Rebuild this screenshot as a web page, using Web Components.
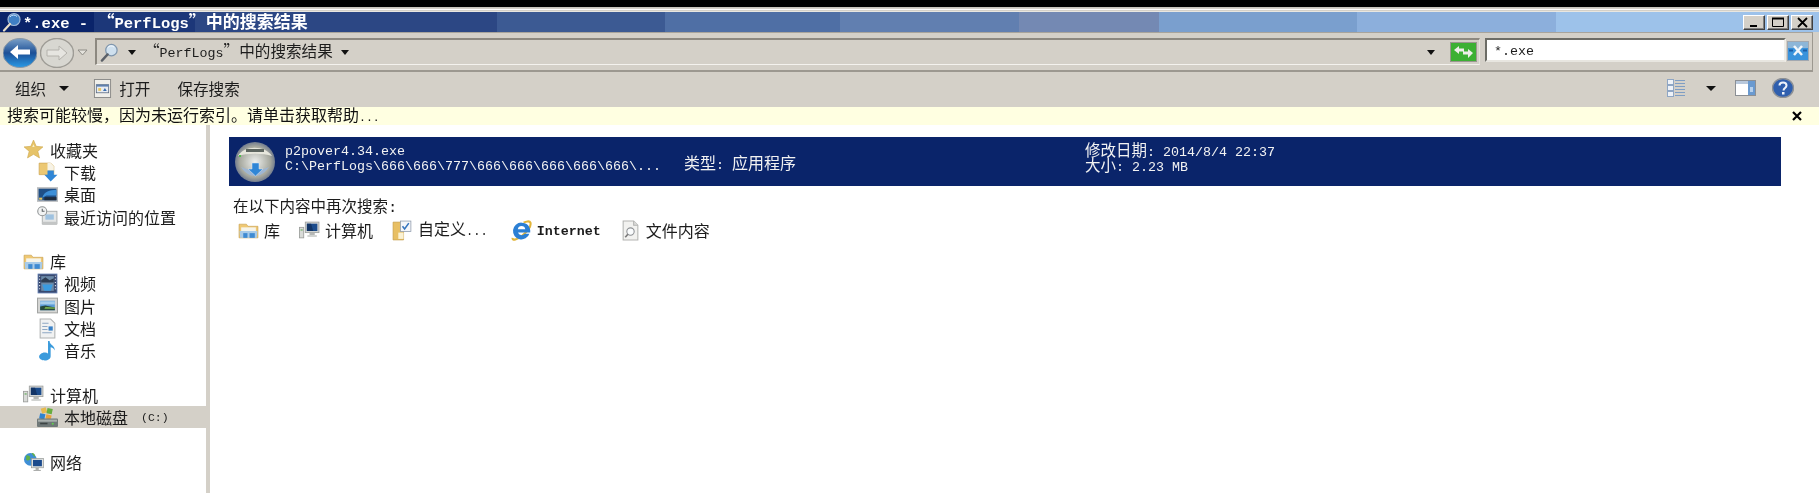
<!DOCTYPE html>
<html lang="zh-CN">
<head>
<meta charset="utf-8">
<title>*.exe - PerfLogs</title>
<style>
html, body { margin: 0; height: 100%; background: #000; overflow: hidden; }
</style>
</head>
<body>
<explorer-window>
  <title-bar slot="title"><lat-text>*.exe - </lat-text>“<lat-text>PerfLogs</lat-text>”中的搜索结果</title-bar>
  <address-bar slot="address">“<lat-text>PerfLogs</lat-text>”中的搜索结果</address-bar>
  <tool-bar slot="tools"></tool-bar>
  <info-bar slot="info">搜索可能较慢，因为未运行索引。请单击获取帮助<lat-text>...</lat-text></info-bar>
  <nav-pane slot="nav">
    <nav-item icon="star" head>收藏夹</nav-item>
    <nav-item icon="download">下载</nav-item>
    <nav-item icon="desktop">桌面</nav-item>
    <nav-item icon="recent">最近访问的位置</nav-item>
    <nav-item icon="library" head gap>库</nav-item>
    <nav-item icon="video">视频</nav-item>
    <nav-item icon="picture">图片</nav-item>
    <nav-item icon="doc">文档</nav-item>
    <nav-item icon="music">音乐</nav-item>
    <nav-item icon="computer" head gap>计算机</nav-item>
    <nav-item icon="drive" selected note="(C:)">本地磁盘</nav-item>
    <nav-item icon="network" head gap>网络</nav-item>
  </nav-pane>
  <result-row slot="main"
    name="p2pover4.34.exe"
    path="C:\PerfLogs\666\666\777\666\666\666\666\666\..."
    kind="应用程序"
    date="2014/8/4 22:37"
    size="2.23 MB"></result-row>
  <search-again slot="main">
    <again-item icon="library">库</again-item>
    <again-item icon="computer">计算机</again-item>
    <again-item icon="custom">自定义<lat-text>...</lat-text></again-item>
    <again-item icon="ie" style="margin-left:4px"><lat-text style="font-weight:700;font-size:13.330px">Internet</lat-text></again-item>
    <again-item icon="filetext">文件内容</again-item>
  </search-again>
</explorer-window>

<script>
const CJK = `"Noto Sans CJK SC", sans-serif`

// small icons, all on a 20x20 box
const ICONS = {
  star: `<path d="M10 1l2.6 6 6.4.5-4.9 4.2 1.6 6.3L10 14.6 4.3 18l1.6-6.3L1 7.5 7.4 7z" fill="#e6c368" stroke="#cfa94e" stroke-width=".6"/><path d="M10 5l1 2.6H8.8z" fill="#fbf0c8"/>`,
  download: `<path d="M2 2h11l3 3v8H2z" fill="#ecc873" stroke="#c9a352" stroke-width=".6"/><path d="M10 2h3l3 3v4h-6z" fill="#f7f3e6"/><path d="M10 9h6v4h3.5L13 19.5 7 13h3z" fill="#2f86d6"/>`,
  desktop: `<rect x="0" y="3" width="20" height="14" fill="#b9bcbe"/><rect x="1.5" y="4.5" width="17" height="11" fill="#1f4f86"/><path d="M5 13c2-6 7-7 13.5-7.500V11H9z" fill="#3c8fd8"/><rect x="7" y="12.500" width="11.500" height="3" fill="#1e2c3e"/><rect x="2" y="13" width="3" height="2" fill="#e5c460"/>`,
  recent: `<rect x="5" y="5" width="14" height="12" fill="#e4e6e6" stroke="#a3a6a6" stroke-width=".8"/><rect x="8" y="8" width="8" height="5" fill="#9fc2e0"/><rect x="5" y="15" width="14" height="3" fill="#c3c5c5"/><circle cx="5" cy="5" r="4.300" fill="#f2f3f3" stroke="#8f9394"/><path d="M5 2.500V5h2.200" stroke="#5b6164" fill="none"/>`,
  library: `<path d="M1 4h7l1.500 2H19v11H1z" fill="#efc873" stroke="#c8a14f" stroke-width=".6"/><rect x="3" y="7" width="14" height="4" fill="#f6f4ea"/><path d="M1.500 10.500h17L18 17H2z" fill="#a8cbe8"/><rect x="5" y="12.500" width="4" height="4.500" fill="#3f8bd2"/><rect x="11" y="12.500" width="5" height="4.500" fill="#3f8bd2"/>`,
  video: `<rect x="1" y="1" width="18" height="18" fill="#394a70" stroke="#5d79ae" stroke-width=".8"/><rect x="4" y="3" width="12" height="14" fill="#6b8aa8"/><path d="M4 7l4-3 4 3 4-2v4H4z" fill="#2d3d52"/><path d="M5 11h10l-2 6H7z" fill="#3a9be0"/><path d="M2 3h1M2 6h1M2 9h1M2 12h1M2 15h1M17 3h1M17 6h1M17 9h1M17 12h1M17 15h1" stroke="#dfe6f0"/>`,
  picture: `<rect x="0.500" y="3" width="19" height="14" fill="#d6d7d5" stroke="#a2a4a2"/><rect x="3" y="5.500" width="14" height="9" fill="#5a9bd6"/><path d="M3 6h14v3H3z" fill="#a8cfeb"/><path d="M3 11l5-1 9 2v2.500H3z" fill="#254a3e"/><path d="M8 11.500l9 .5v1H7z" fill="#79b24c"/>`,
  doc: `<path d="M3 1h10l4 4v14H3z" fill="#f1f2f2" stroke="#b0b2b2"/><path d="M5 5h6M5 8h5M5 11h5M5 14h9" stroke="#8fa8c4"/><rect x="11" y="8" width="4" height="4" fill="#3a82c8"/>`,
  music: `<path d="M12 1c0 4 5 4 5 9-1-2-3-3-4-3v8.500c0 2.500-2.500 4-5.500 4S2 18 2 16s3-4.500 6-4c1 .1 2 .5 2.500 1V1z" fill="#3b9bdc"/>`,
  computer: `<rect x="6" y="2" width="13" height="10" fill="#d7d8d6" stroke="#9da09e" stroke-width=".8"/><rect x="7.500" y="3.500" width="10" height="7" fill="#1c4c8c"/><path d="M7.500 3.500h4l2 7h-6z" fill="#123466"/><rect x="10" y="12" width="5" height="2.500" fill="#b6b8b6"/><rect x="8" y="14.500" width="9" height="1.500" fill="#c8cac8"/><rect x="0.500" y="7" width="4" height="10" fill="#d9dbd8" stroke="#9a9c9a" stroke-width=".8"/><rect x="1.500" y="9" width="2" height="1" fill="#57a64e"/>`,
  drive: `<path d="M4 1h5v5H4z" fill="#e6b94e" transform="rotate(-18 6 3)"/><path d="M10 1l5 1-1 5-5-1z" fill="#67ad3f"/><path d="M3 6l5 1-1 5-5-1z" fill="#2f83d0"/><path d="M9 7l5 1-1 4-5-1z" fill="#e9a23d"/><rect x="0" y="11" width="20" height="8" rx="1" fill="#6f7878"/><rect x="1" y="12" width="18" height="2" fill="#a9b0ae"/><circle cx="15" cy="16" r="1" fill="#5fd04b"/><rect x="3" y="15" width="7" height="1.500" fill="#3c4444"/>`,
  network: `<circle cx="7" cy="8" r="6" fill="#3f8fd6"/><path d="M3 4c3 0 4 1 4 3s-3 3-4 1zM8 2c3 0 4 2 3 4z" fill="#5fb04a"/><rect x="8" y="7" width="11.500" height="9" fill="#dfe1df" stroke="#8e9290" stroke-width=".6"/><rect x="9.500" y="8.500" width="8.500" height="6" fill="#1b4a8c"/><rect x="12" y="16" width="3" height="2" fill="#a8aaa8"/><rect x="10" y="18" width="7" height="1" fill="#a8aaa8"/>`,
  custom: `<path d="M1 2h10v17H1z" fill="#e8bf63" stroke="#c39a48" stroke-width=".6"/><rect x="8" y="1" width="10" height="10" fill="#f4f6fa" stroke="#8a97a8" stroke-width=".7"/><path d="M10 6l2 2.500L16 3" stroke="#3474bd" fill="none" stroke-width="1.500"/><rect x="6" y="12" width="5" height="6" fill="#fbf2d4"/>`,
  ie: `<path d="M1.500 17c-.5 2.500 3.500 2.500 8.500-1.500s9.500-9.500 8.500-13C17.800.500 14 1.500 12 2.500" fill="none" stroke="#e2b53a" stroke-width="2"/><path d="M10 2.500a8 8 0 1 0 7.500 10.500h-4.500a3.600 3.600 0 0 1-6.300-1.200H18.300C19 6.500 15.500 2.500 10 2.500zM6.500 8.800A3.600 3.600 0 0 1 13.600 8.800z" fill="#2b7fd4" fill-rule="evenodd"/>`,
  filetext: `<path d="M3 1h10l4 4v14H3z" fill="#f2f2f0" stroke="#b3b4b2"/><path d="M13 1v4h4" fill="#dcdcda" stroke="#b3b4b2"/><circle cx="10" cy="11" r="3.500" fill="#fafcfd" stroke="#8d9094"/><path d="M7.500 13.500L5 16.500" stroke="#777" stroke-width="1.500"/>`,
  open: `<rect x="1.500" y="0.500" width="17" height="19" fill="#f0efea" stroke="#8a8a88"/><rect x="3.500" y="6" width="13" height="8.500" fill="#e8ecf2" stroke="#54657e" stroke-width=".8"/><rect x="3.500" y="6" width="13" height="2" fill="#5f80ae"/><rect x="5.500" y="9.500" width="3" height="3" fill="#e9c863"/><path d="M10.500 12.500l2-3 2 3z" fill="#3a6fb0"/>`,
  glass: `<circle cx="12" cy="7.500" r="6" fill="#cfe0ee" stroke="#7f96ad" stroke-width="1.300"/><path d="M8 5a4.500 4.500 0 0 1 7-.5" stroke="#f7fbff" fill="none"/><path d="M8 12L2 18.500" stroke="#5b6068" stroke-width="2.500" stroke-linecap="round"/>`,
  glassDark: `<circle cx="12" cy="7.500" r="6" fill="#3f7fc4" stroke="#9db7d8" stroke-width="1.200"/><path d="M8 5a4.500 4.500 0 0 1 7-.5" stroke="#cfe6ff" fill="none"/><path d="M8 12L2 18.500" stroke="#e8dfc8" stroke-width="2.200" stroke-linecap="round"/>`,
}

class LatText extends HTMLElement {
  constructor() {
    super()
    // no whitespace before the slot: this sits inside running text
    this.attachShadow({mode: 'open'}).innerHTML = `<style>
:host {
  display: inline;
  font-family: "Liberation Mono", monospace;
  font-size: var(--lat-size, .833em);
}
</style><slot></slot>`
  }
}
customElements.define('lat-text', LatText)

class WinIcon extends HTMLElement {
  constructor() {
    super()
    this.attachShadow({mode: 'open'})
  }
  connectedCallback() {
    const s = this.getAttribute('size') || 21
    this.shadowRoot.innerHTML = `
<style>:host { display: block; flex: none; width: ${s}px; height: ${s}px; } svg { display: block; }</style>
<svg viewBox="0 0 20 20" width="${s}" height="${s}">${ICONS[this.getAttribute('name')]}</svg>`
  }
}
customElements.define('win-icon', WinIcon)

class ExplorerWindow extends HTMLElement {
  constructor() {
    super()
    this.attachShadow({mode: 'open'}).innerHTML = `
<style>
:host {
  display: flex;
  flex-direction: column;
  height: 486px;
  margin-top: 7px;
  background: #d4d0c8;
  font: 16px/20px ${CJK};
  text-autospace: no-autospace;
  color: #1c1c1c;
  filter: blur(.4px);
  overflow: hidden;
}
.edge { height: 5px; flex: none; background: #d4d0c8; border-top: 1px solid #c8c4bc; border-bottom: 1px solid #e8e6e0; box-sizing: border-box; }
.edge::before { content: ""; display: block; height: 1px; margin-top: 1px; background: #fff; }
.body { flex: 1; display: flex; min-height: 0; background: #fff; }
.split { flex: none; width: 4px; margin-left: -3px; background: #d4d0c8; }
main { flex: 1; padding: 12px 38px 0 19px; min-width: 0; }
</style>
<div class="edge"></div>
<slot name="title"></slot>
<slot name="address"></slot>
<slot name="tools"></slot>
<slot name="info"></slot>
<div class="body">
  <slot name="nav"></slot>
  <div class="split"></div>
  <main><slot name="main"></slot></main>
</div>`
  }
}
customElements.define('explorer-window', ExplorerWindow)

class TitleBar extends HTMLElement {
  constructor() {
    super()
    this.attachShadow({mode: 'open'}).innerHTML = `
<style>
:host {
  display: flex;
  align-items: center;
  flex: none;
  height: 20px;
  padding: 0 6px 0 2px;
  color: #fff;
  font-weight: 700;
  font-size: 17px;
  --lat-size: 15.5px;
  background: linear-gradient(90deg,
    #0a246a 0 94px, #1c3779 94px 195px, #2c4784 195px 497px, #3c5a93 497px 665px,
    #4f6fa5 665px 840px, #617fb0 840px 1019px, #7489b3 1019px 1159px,
    #7a9fce 1159px 1357px, #8cafdc 1357px 1556px, #9dc2ea 1556px);
}
.text { flex: 1; margin-left: 1px; white-space: nowrap; }
.btns { display: flex; gap: 2px; }
.btns button {
  width: 22px; height: 15px; padding: 0; margin: 0;
  background: #d4d0c8;
  border: 1px solid; border-color: #fff #404040 #404040 #fff;
  box-shadow: inset -1px -1px 0 #808080;
  display: flex; align-items: center; justify-content: center;
}
</style>
<win-icon name="glassDark" size="20"></win-icon>
<div class="text"><slot></slot></div>
<div class="btns">
  <button aria-label="最小化"><svg width="12" height="11"><rect x="2" y="8" width="7" height="2" fill="#000"/></svg></button>
  <button aria-label="最大化"><svg width="14" height="11"><path d="M1.500 1.500h11v8h-11z" fill="none" stroke="#000"/><path d="M1 1.500h12" stroke="#000" stroke-width="2"/></svg></button>
  <button aria-label="关闭"><svg width="13" height="11"><path d="M2 1l9 9M11 1l-9 9" stroke="#000" stroke-width="1.800"/></svg></button>
</div>`
  }
}
customElements.define('title-bar', TitleBar)

class AddressBar extends HTMLElement {
  constructor() {
    super()
    this.attachShadow({mode: 'open'}).innerHTML = `
<style>
:host {
  display: flex;
  flex: none;
  height: 40px;
  box-sizing: border-box;
  padding: 5px 3px 0 3px;
  background: #d4d0c8;
  border-top: 1px solid #a8a49c;
  border-bottom: 2px solid #9c9890;
  border-right: 1px solid #9c9890;
  margin-right: 6px;
  font-size: 15.600px;
  --lat-size: 13.330px;
}
.circle { width: 34px; height: 30px; flex: none; margin-right: 3px; margin-top: 0; }
.drop { margin: 11px 7px 0 0; flex: none; }
.field {
  flex: 1;
  height: 24px;
  display: flex;
  align-items: center;
  padding-left: 3px;
  border: 2px solid; border-color: #8c8880 #e4e2dc #f4f2ee #8c8880;
  border-width: 2px 1px 1px 2px;
}
.crumb { margin: 0 8px; flex: none; white-space: nowrap; }
.arrow { width: 0; height: 0; flex: none; border: 4.500px solid transparent; border-top: 5px solid #111; border-bottom: 0; }
.spring { flex: 1; }
.go { margin: 0 2px 0 15px; flex: none; }
.search {
  width: 301px; flex: none; margin-left: 5px;
  height: 24px;
  box-sizing: border-box;
  background: #fff;
  border: 2px solid; border-color: #6c6c66 #f0eee8 #e8e6e0 #6c6c66;
  padding: 4px 0 0 7px;
  display: flex; align-items: center;
  font-family: "Liberation Mono", monospace;
  font-size: 13.330px;
}
.clear { flex: none; margin-left: 1px; margin-top: 3px; }
</style>
<svg class="circle" viewBox="0 0 34 30">
  <defs>
    <linearGradient id="b" x1="0" y1="0" x2="0" y2="1"><stop offset="0" stop-color="#7aa0c8"/><stop offset=".5" stop-color="#1c4f96"/><stop offset="1" stop-color="#2a9ae6"/></linearGradient>
  </defs>
  <ellipse cx="17" cy="15" rx="17" ry="14.500" fill="url(#b)" stroke="#8a98a6"/>
  <path d="M7 14l8-7v4.500h12v5H15V21z" fill="#fff"/>
</svg>
<svg class="circle" viewBox="0 0 34 30">
  <ellipse cx="17" cy="15" rx="16.500" ry="14.500" fill="#d8d7d1" stroke="#9e9c96" stroke-width="1.500"/>
  <path d="M27 15l-8-7v4H7v6h12v4z" fill="#e6e5e0" stroke="#b4b2ac"/>
</svg>
<svg class="drop" width="11" height="7"><path d="M1 1h9L5.500 6z" fill="#e4e2dc" stroke="#8e8c86"/></svg>
<div class="field">
  <win-icon name="glass" size="19"></win-icon>
  <span class="arrow" style="margin-left:9px"></span>
  <span class="crumb"><slot></slot></span>
  <span class="arrow"></span>
  <span class="spring"></span>
  <span class="arrow"></span>
  <svg class="go" width="27" height="20" viewBox="0 0 27 20">
    <rect x=".5" y=".5" width="26" height="19" fill="#3cb034" stroke="#99978f"/>
    <path d="M4 8l5-4v2.500h5v3H9V12zM23 11l-5-4v2.500h-5v3h5V16z" fill="#eeeeea"/>
  </svg>
</div>
<div class="search">*.exe</div>
<svg class="clear" width="22" height="20" viewBox="0 0 22 20">
  <rect x=".5" y=".5" width="21" height="19" fill="#3a93dc" stroke="#a2a8b0"/>
  <rect x="1" y="1" width="20" height="6" fill="#8db6d8"/>
  <path d="M7 5l8 9M15 5l-8 9" stroke="#f2f6fa" stroke-width="2.500"/>
  <path d="M2 9.500h4M16 9.500h4" stroke="#1c5ea8" stroke-width="2"/>
</svg>`
  }
}
customElements.define('address-bar', AddressBar)

class ToolBar extends HTMLElement {
  constructor() {
    super()
    this.attachShadow({mode: 'open'}).innerHTML = `
<style>
:host {
  display: flex;
  align-items: center;
  flex: none;
  height: 35px;
  box-sizing: border-box;
  padding: 0 25px 3px 15px;
  background: #d4d0c8;
  font-size: 15.600px;
}
.arrow { width: 0; height: 0; flex: none; border: 5px solid transparent; border-top: 5px solid #111; border-bottom: 0; }
.spring { flex: 1; }
</style>
<span>组织</span>
<span class="arrow" style="margin:0 24px 0 13px"></span>
<win-icon name="open" size="19"></win-icon>
<span style="margin-left:7px">打开</span>
<span style="margin-left:27px">保存搜索</span>
<span class="spring"></span>
<svg width="19" height="18" viewBox="0 0 19 18">
  <rect x=".5" y=".5" width="6" height="5" fill="#eef2f8" stroke="#8fa6c4"/><rect x=".5" y="6.500" width="6" height="5" fill="#eef2f8" stroke="#8fa6c4"/><rect x=".5" y="12.500" width="6" height="5" fill="#eef2f8" stroke="#8fa6c4"/>
  <path d="M8 1.500h10M8 4.500h10M8 7.500h10M8 10.500h10M8 13.500h10M8 16.500h10" stroke="#7f9ec4"/>
</svg>
<span class="arrow" style="margin:0 19px 0 20px"></span>
<svg width="21" height="16" viewBox="0 0 21 16">
  <rect x=".5" y=".5" width="20" height="15" fill="#fff" stroke="#8b8f94"/>
  <rect x="1" y="1" width="19" height="3" fill="#b8c8dc"/>
  <rect x="13" y="1" width="7" height="14" fill="#6a9ad0"/>
  <rect x="15" y="7" width="3" height="5" fill="#b6d0ec"/>
</svg>
<svg style="margin-left:16px" width="22" height="20" viewBox="0 0 22 20">
  <ellipse cx="11" cy="10" rx="10.500" ry="9.500" fill="#2f5fae" stroke="#8d9196" stroke-width="1.500"/>
  <path d="M7.500 7.500c0-4 7-4 7 0 0 2.500-3 2.500-3 5" fill="none" stroke="#eef3fa" stroke-width="2"/>
  <rect x="10" y="14" width="2.500" height="2.500" fill="#eef3fa"/>
</svg>`
  }
}
customElements.define('tool-bar', ToolBar)

class InfoBar extends HTMLElement {
  constructor() {
    super()
    this.attachShadow({mode: 'open'}).innerHTML = `
<style>
:host {
  display: flex;
  align-items: center;
  flex: none;
  height: 18px;
  padding: 0 16px 0 7px;
  background: #ffffe1;
  color: #111;
  --lat-size: 11.500px;
}
.text { flex: 1; white-space: nowrap; }
</style>
<span class="text"><slot></slot></span>
<svg width="12" height="10"><path d="M2 1l8 8M10 1L2 9" stroke="#000" stroke-width="2.200"/></svg>`
  }
}
customElements.define('info-bar', InfoBar)

class NavPane extends HTMLElement {
  constructor() {
    super()
    this.attachShadow({mode: 'open'}).innerHTML = `
<style>
:host {
  display: block;
  flex: none;
  width: 209px;
  box-sizing: border-box;
  padding-top: 13.500px;
}
</style>
<slot></slot>`
  }
}
customElements.define('nav-pane', NavPane)

class NavItem extends HTMLElement {
  constructor() {
    super()
    this.attachShadow({mode: 'open'})
  }
  connectedCallback() {
    const head = this.hasAttribute('head')
    const note = this.getAttribute('note')
    this.shadowRoot.innerHTML = `
<style>
:host {
  display: flex;
  align-items: center;
  height: 22.300px;
  box-sizing: border-box;
  padding-left: ${head ? 23 : 37}px;
  margin-top: ${this.hasAttribute('gap') ? 22.300 : 0}px;
  white-space: nowrap;
}
:host([selected]) { background: #d4d0c8; }
.label { margin-left: 6px; }
.note { margin-left: 13px; font: 11.500px "Liberation Mono", monospace; }
</style>
<win-icon name="${this.getAttribute('icon')}"></win-icon>
<span class="label"><slot></slot></span>
${note ? `<span class="note">${note}</span>` : ''}`
  }
}
customElements.define('nav-item', NavItem)

class ResultRow extends HTMLElement {
  constructor() {
    super()
    this.attachShadow({mode: 'open'})
  }
  connectedCallback() {
    const a = n => this.getAttribute(n)
    this.shadowRoot.innerHTML = `
<style>
:host {
  display: grid;
  grid-template-columns: 56px 399px 401px 1fr;
  align-items: center;
  height: 49px;
  box-sizing: border-box;
  background: #0a246a;
  color: #f2f2f2;
  line-height: 15px;
}
svg { margin-left: 5px; display: block; }
.mono { font: 13.330px/15px "Liberation Mono", monospace; white-space: nowrap; }
.kind { align-self: end; margin-bottom: 13px; white-space: nowrap; }
.stack { margin-top: -6px; }
.dates { margin-top: -9px; font-size: 15.500px; }
.line { height: 15px; white-space: nowrap; }
</style>
<svg width="42" height="42" viewBox="0 0 42 42">
  <defs>
    <radialGradient id="d" cx=".5" cy=".5" r=".55"><stop offset="0" stop-color="#eef0ee"/><stop offset=".7" stop-color="#a6a89e"/><stop offset="1" stop-color="#5d6a88"/></radialGradient>
  </defs>
  <circle cx="21" cy="21" r="20" fill="url(#d)"/>
  <path d="M4 15c6-11 27-11 34 0-9-3-25-3-34 0z" fill="#e6e6dc"/>
  <rect x="12" y="8" width="18" height="3" fill="#5e6660"/>
  <path d="M7 26c8 12 20 12 28 0-8 4-20 4-28 0z" fill="#9fb6d2"/>
  <path d="M18 22h7v6h4l-7.500 7-7.500-7h4z" fill="#2f86d6" stroke="#d8e6f4" stroke-width=".5"/>
  <rect x="5" y="14" width="2" height="2" fill="#4fc04a"/>
</svg>
<div class="stack">
  <div class="mono">${a('name')}</div>
  <div class="mono">${a('path')}</div>
</div>
<div class="kind">类型<span class="mono">: </span>${a('kind')}</div>
<div class="dates">
  <div class="line">修改日期<span class="mono">: ${a('date')}</span></div>
  <div class="line">大小<span class="mono">: ${a('size')}</span></div>
</div>`
  }
}
customElements.define('result-row', ResultRow)

class SearchAgain extends HTMLElement {
  constructor() {
    super()
    this.attachShadow({mode: 'open'}).innerHTML = `
<style>
:host { display: block; padding: 9px 0 0 4px; --lat-size: 12px; }
.head { font-size: 15.500px; line-height: 20px; }
.row { display: flex; align-items: center; margin-top: 0; padding-left: 5px; gap: 19px; }
</style>
<div class="head">在以下内容中再次搜索<span style="font-family:'Liberation Mono',monospace">:</span></div>
<div class="row"><slot></slot></div>`
  }
}
customElements.define('search-again', SearchAgain)

class AgainItem extends HTMLElement {
  constructor() {
    super()
    this.attachShadow({mode: 'open'})
  }
  connectedCallback() {
    this.shadowRoot.innerHTML = `
<style>
:host { display: flex; align-items: center; gap: 5px; white-space: nowrap; }
</style>
<win-icon name="${this.getAttribute('icon')}"></win-icon>
<span><slot></slot></span>`
  }
}
customElements.define('again-item', AgainItem)
</script>
</body>
</html>
